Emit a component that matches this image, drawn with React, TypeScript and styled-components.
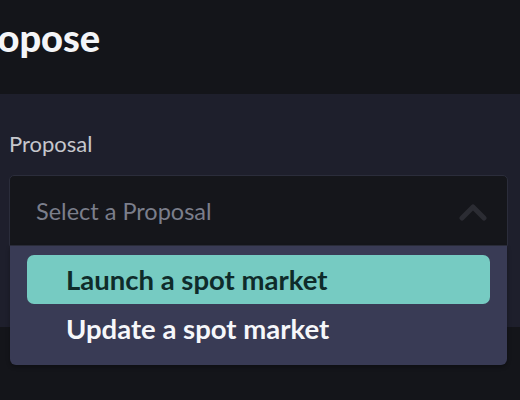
import styled, { createGlobalStyle } from 'styled-components';

const GlobalStyle = createGlobalStyle`
  html, body {
    margin: 0;
    padding: 0;
    background: #14151a;
    font-family: 'Lato', 'Noto Sans', sans-serif;
    overflow: hidden;
  }
`;

const Styled = {
  Page: styled.div`
    min-height: 400px;
    background: #14151a;
  `,

  Header: styled.header`
    height: 94px;
    box-sizing: border-box;
    padding-top: 18px;
    overflow: hidden;
  `,

  Title: styled.h1`
    margin: 0 0 0 -40px;
    font-size: 38px;
    line-height: 38px;
    font-weight: 900;
    color: #f4f5f8;
  `,

  Panel: styled.section`
    height: 233px;
    box-sizing: border-box;
    background: #1e1f2c;
    padding: 38px 12px 0 9px;
  `,

  Label: styled.label`
    display: block;
    font-size: 22px;
    line-height: 24px;
    color: #c6c7cd;
    margin-bottom: 19px;
  `,

  Field: styled.div`
    position: relative;
  `,

  Trigger: styled.div`
    height: 71px;
    box-sizing: border-box;
    display: flex;
    align-items: center;
    justify-content: space-between;
    padding: 0 20px 0 26px;
    background: #15161b;
    border: 1px solid #2b2d3b;
    border-radius: 5px 5px 0 0;
  `,

  Placeholder: styled.span`
    font-size: 23.5px;
    color: #7b7e8b;
  `,

  Menu: styled.ul`
    position: absolute;
    top: 100%;
    left: 1px;
    right: 1px;
    margin: 0;
    padding: 9px 17px 0;
    height: 119px;
    box-sizing: border-box;
    list-style: none;
    background: #393b55;
    border-radius: 0 0 6px 6px;
    box-shadow: 0 2px 4px rgba(0, 0, 0, 0.3);
  `,

  Option: styled.li<{ $active?: boolean }>`
    height: 49px;
    display: flex;
    align-items: center;
    padding-left: 39px;
    border-radius: 7px;
    font-size: 27.5px;
    font-weight: 700;
    background: ${({ $active }) => ($active ? '#76cbc2' : 'transparent')};
    color: ${({ $active }) => ($active ? '#0f2b2a' : '#f6f7fa')};
  `,
};

const ChevronUp = () => (
  <svg width="28" height="20" viewBox="0 0 28 20">
    <path d="M3 17 L14 6 L25 17" fill="none" stroke="#2b2c33" strokeWidth="5" strokeLinecap="round" strokeLinejoin="round" />
  </svg>
);

const options = ['Launch a spot market', 'Update a spot market'];

export default function App() {
  return (
    <>
      <GlobalStyle />
      <Styled.Page>
        <Styled.Header>
          <Styled.Title>Propose</Styled.Title>
        </Styled.Header>
        <Styled.Panel>
          <Styled.Label>Proposal</Styled.Label>
          <Styled.Field>
            <Styled.Trigger>
              <Styled.Placeholder>Select a Proposal</Styled.Placeholder>
              <ChevronUp />
            </Styled.Trigger>
            <Styled.Menu>
              {options.map((label, i) => (
                <Styled.Option key={label} $active={i === 0}>
                  {label}
                </Styled.Option>
              ))}
            </Styled.Menu>
          </Styled.Field>
        </Styled.Panel>
      </Styled.Page>
    </>
  );
}
